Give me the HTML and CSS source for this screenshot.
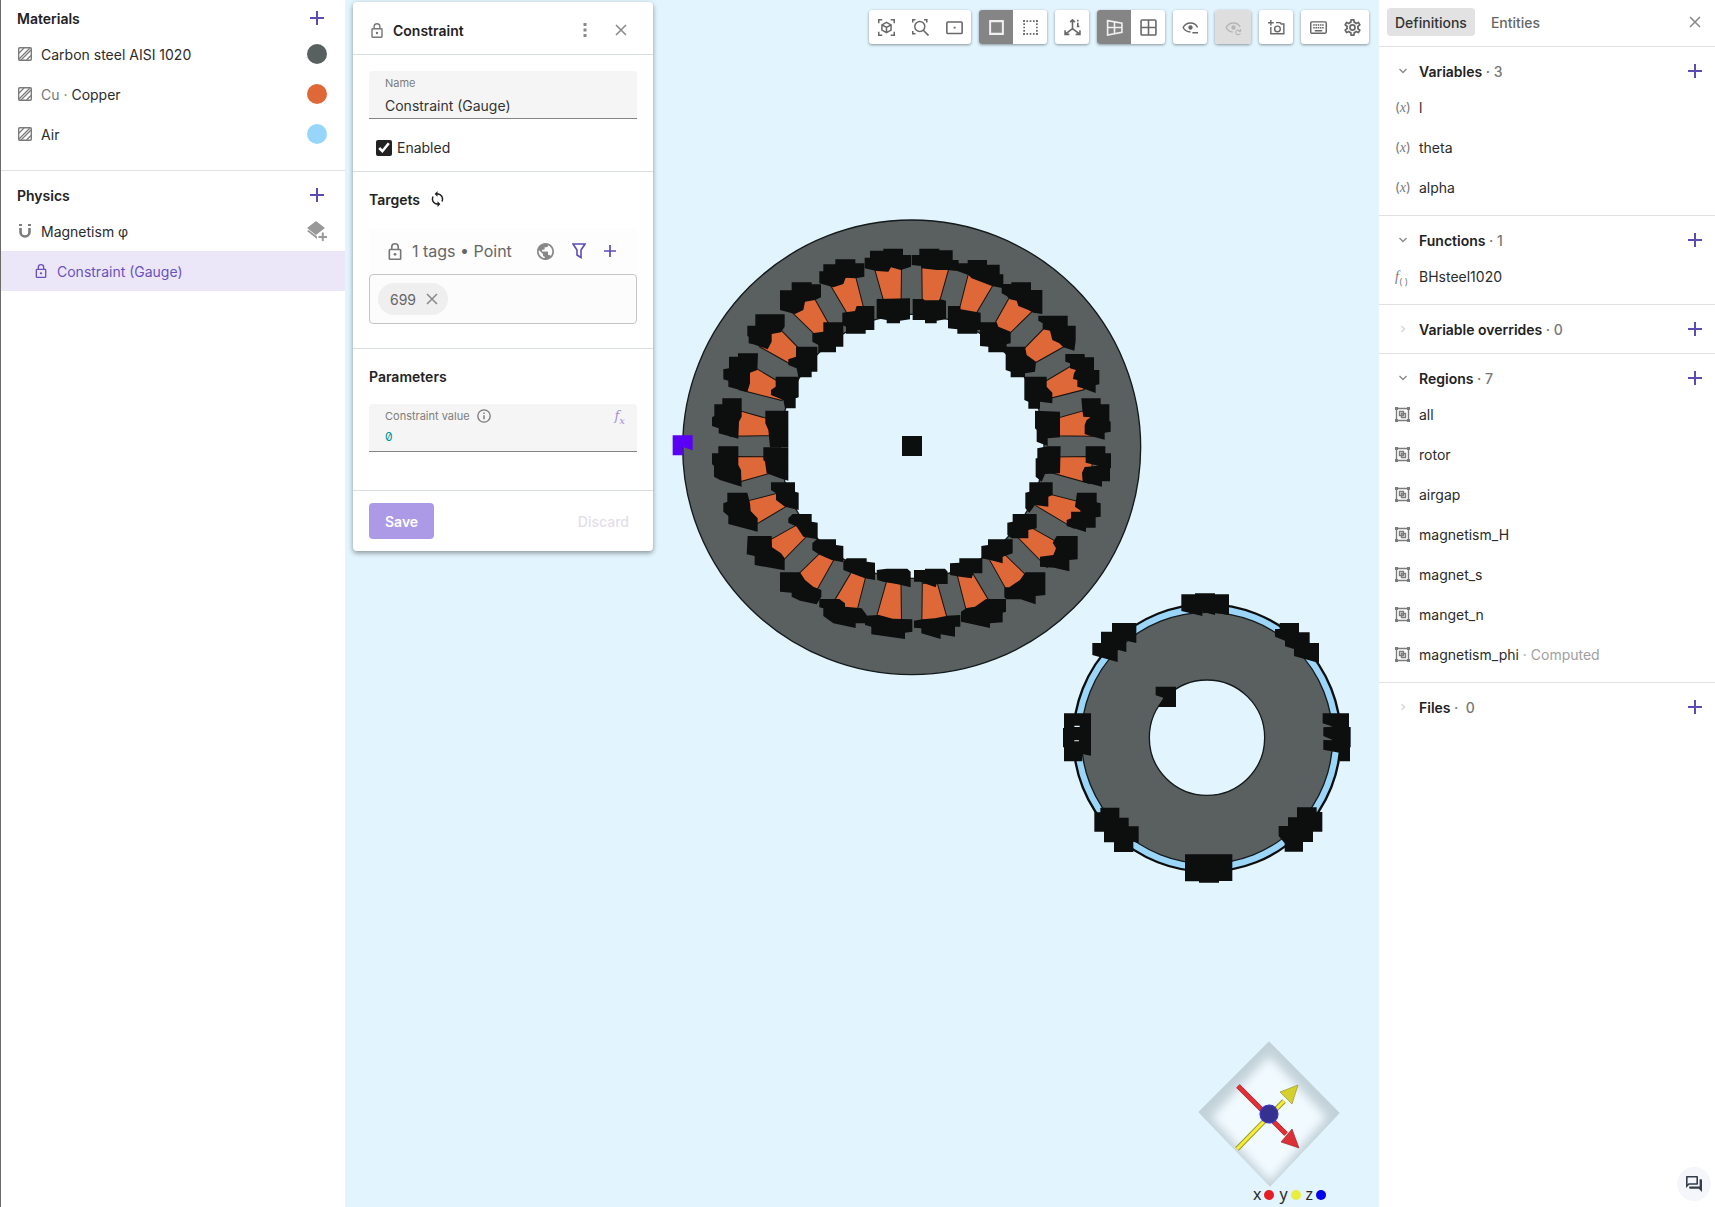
FILE: index.html
```html
<!DOCTYPE html>
<html lang="en">
<head>
    <meta charset="UTF-8">
    <meta name="viewport" content="width=device-width, initial-scale=1.0">
    <title>Constraint (Gauge)</title>
    <link rel="stylesheet" href="styles.css">
</head>
<body>
    <!-- Icon symbols -->
    <svg class="sprite" aria-hidden="true">
        <symbol id="plus" viewBox="0 0 14 14"><path d="M7 0v14M0 7h14" fill="none" stroke="currentColor" stroke-width="2"/></symbol>
        <symbol id="close" viewBox="0 0 12 12"><path d="M1 1l10 10M11 1L1 11" fill="none" stroke="currentColor" stroke-width="1.5"/></symbol>
        <symbol id="down" viewBox="0 0 16 16"><path d="M4.500 6l3.500 3.500L11.500 6" fill="none" stroke="currentColor" stroke-width="1.300"/></symbol>
        <symbol id="right" viewBox="0 0 16 16"><path d="M6.500 5l3 3-3 3" fill="none" stroke="currentColor" stroke-width="1.300"/></symbol>
        <symbol id="hatch" viewBox="0 0 14 14"><rect x=".7" y=".7" width="12.600" height="12.600" rx="1" fill="none" stroke="currentColor" stroke-width="1.400"/><path d="M1 6l5-5M1 12L12 1M3 13L13 3M8.500 13L13 8.500" stroke="currentColor" stroke-width="1.300"/></symbol>
        <symbol id="magnet" viewBox="0 0 14 14"><path d="M2.500 4v4a4.500 4.500 0 0 0 9 0V4" fill="none" stroke="currentColor" stroke-width="2.600"/><path d="M1 0h3v2H1zM10 0h3v2h-3z" fill="currentColor"/></symbol>
        <symbol id="layers" viewBox="0 0 20 20"><path d="M9 0l9 7-9 7-9-7zM0 10l1.500-1L10 15.500v2.500zM14.800 11.500h2V15H20v2h-3.200v3.500h-2V17h-3.300v-2h3.300z" fill="currentColor"/></symbol>
        <symbol id="lock" viewBox="4 1 16 21"><path d="M18 9H6a1 1 0 0 0-1 1v10a1 1 0 0 0 1 1h12a1 1 0 0 0 1-1V10a1 1 0 0 0-1-1zM8 9V6a4 4 0 0 1 8 0v3" fill="none" stroke="currentColor" stroke-width="2"/><circle cx="12" cy="15" r="1.700" fill="currentColor"/></symbol>
        <symbol id="dots" viewBox="0 0 4 14"><path d="M.5 0h3v3h-3zM.5 5.500h3v3h-3zM.5 11h3v3h-3z" fill="currentColor"/></symbol>
        <symbol id="sync" viewBox="3 1 18 22"><path d="M12 4V1L8 5l4 4V6c3.310 0 6 2.690 6 6 0 1.010-.25 1.970-.7 2.800l1.460 1.460C19.540 15.030 20 13.570 20 12c0-4.420-3.580-8-8-8zm0 14c-3.310 0-6-2.690-6-6 0-1.010.25-1.970.7-2.800L5.240 7.740C4.460 8.970 4 10.430 4 12c0 4.420 3.580 8 8 8v3l4-4-4-4v3z" fill="currentColor"/></symbol>
        <symbol id="globe" viewBox="2 2 20 20"><path d="M12 2C6.480 2 2 6.480 2 12s4.480 10 10 10 10-4.480 10-10S17.520 2 12 2zm-1 17.930c-3.950-.49-7-3.850-7-7.930 0-.62.08-1.210.21-1.790L9 15v1c0 1.100.9 2 2 2v1.930zm6.900-2.540c-.26-.81-1-1.390-1.900-1.390h-1v-3c0-.55-.45-1-1-1H8v-2h2c.55 0 1-.45 1-1V7h2c1.100 0 2-.9 2-2v-.41c2.930 1.190 5 4.060 5 7.410 0 2.080-.8 3.970-2.100 5.390z" fill="currentColor"/></symbol>
        <symbol id="filter" viewBox="0 0 14 16"><path d="M1 1h12L9 7v7.500L5 12V7z" fill="none" stroke="currentColor" stroke-width="1.600"/></symbol>
        <symbol id="info" viewBox="0 0 14 14"><circle cx="7" cy="7" r="6.200" fill="none" stroke="currentColor" stroke-width="1.300"/><path d="M7 6.200v4M7 3.600V5" stroke="currentColor" stroke-width="1.400"/></symbol>
        <symbol id="region" viewBox="0 0 15 15"><path d="M1.500 1.500h12v12h-12zM4.500 4.500h4v4h-4zM6.500 6.500h4v4h-4z" fill="none" stroke="currentColor" stroke-width="1.400"/><path d="M0 0h3v3H0zM12 0h3v3h-3zM0 12h3v3H0zM12 12h3v3h-3z" fill="currentColor"/></symbol>
        <symbol id="fit" viewBox="0 0 16 16"><path d="M.7 4V.7H4M12 .7h3.300V4M15.300 12v3.300H12M4 15.300H.7V12M8 3.200l4.300 2.400v4.900L8 12.900l-4.300-2.400V5.600zM3.700 5.600L8 8l4.300-2.400M8 8v4.900" fill="none" stroke="currentColor" stroke-width="1.400"/></symbol>
        <symbol id="zoomfit" viewBox="0 0 17 17"><path d="M.7 3.500V.7h2.800M12 .7h2.800v2.800M3.500 14.800H.7V12M11 11l5.500 5.500" fill="none" stroke="currentColor" stroke-width="1.600"/><circle cx="7.800" cy="7.500" r="5" fill="none" stroke="currentColor" stroke-width="1.500"/></symbol>
        <symbol id="frame" viewBox="0 0 16 16"><rect x=".8" y="2.800" width="14.400" height="10.800" rx="1" fill="none" stroke="currentColor" stroke-width="1.500"/><path d="M7.200 7.200h1.800V9H7.200z" fill="currentColor"/></symbol>
        <symbol id="solid" viewBox="0 0 16 16"><path d="M2 2h12v12H2z" fill="none" stroke="currentColor" stroke-width="1.900"/></symbol>
        <symbol id="dashed" viewBox="0 0 16 16"><path d="M1 2h14M1 14h14M2 1v14M14 1v14" fill="none" stroke="currentColor" stroke-width="1.600" stroke-dasharray="1.600 1.500"/></symbol>
        <symbol id="axes" viewBox="0 0 16 16"><path d="M8 1v8L1.500 14M8 9l6.500 5M5.800 3L8 .8 10.200 3M1 10.500v4h4M15 10.500v4h-4M13 3.500v3.500M12 7h2.500M13 .8v1.500" fill="none" stroke="currentColor" stroke-width="1.500"/></symbol>
        <symbol id="persp" viewBox="0 0 16 16"><path d="M1.500 1.500L15 4v8.500L1.500 15zM1.500 8H15M8 2.500v11.500" fill="none" stroke="currentColor" stroke-width="1.500"/></symbol>
        <symbol id="grid" viewBox="0 0 16 16"><rect x="1" y="1" width="14" height="14" rx="1" fill="none" stroke="currentColor" stroke-width="1.500"/><path d="M8 1v14M1 8h14" stroke="currentColor" stroke-width="1.500"/></symbol>
        <symbol id="eye" viewBox="0 0 18 16"><path d="M16.500 8C15.200 5 12.400 3.200 9 3.200S2.800 5 1.200 8c1.500 3 4.400 4.700 7.800 4.700" fill="none" stroke="currentColor" stroke-width="1.500"/><circle cx="9" cy="8" r="2.300" fill="currentColor"/><path d="M11 13.500h6" stroke="currentColor" stroke-width="1.500"/></symbol>
        <symbol id="eyesync" viewBox="0 0 18 16"><path d="M16 7.500C14.800 5 12.400 3.200 9 3.200S2.800 5 1.200 8c1.300 2.800 3.800 4.500 7 4.700" fill="none" stroke="currentColor" stroke-width="1.500"/><circle cx="9" cy="8" r="2.300" fill="currentColor"/><path d="M15.800 11.500a2.500 2.500 0 1 0 .5 2.500M16.500 9.500v2.500H14" fill="none" stroke="currentColor" stroke-width="1.100"/></symbol>
        <symbol id="camera" viewBox="0 0 18 16"><path d="M3 0v6M0 3h6" stroke="currentColor" stroke-width="1.500"/><path d="M3 7.500v7.200h13.800V4.300H14l-1.300-1.500H8.500" fill="none" stroke="currentColor" stroke-width="1.500"/><circle cx="10" cy="9.500" r="3" fill="none" stroke="currentColor" stroke-width="1.500"/></symbol>
        <symbol id="keyboard" viewBox="0 0 16 16"><rect x=".7" y="2.700" width="14.600" height="10.600" rx="1" fill="none" stroke="currentColor" stroke-width="1.400"/><path d="M3 5.700h10M3 8.200h10" stroke="currentColor" stroke-width="1.500" stroke-dasharray="1.500 .6"/><path d="M4.500 11h7" stroke="currentColor" stroke-width="1.300"/></symbol>
        <symbol id="cog" viewBox="2 2 20 20"><path d="M12,8A4,4 0 0,1 16,12A4,4 0 0,1 12,16A4,4 0 0,1 8,12A4,4 0 0,1 12,8M12,10A2,2 0 0,0 10,12A2,2 0 0,0 12,14A2,2 0 0,0 14,12A2,2 0 0,0 12,10M10,22C9.750,22 9.540,21.820 9.500,21.580L9.130,18.930C8.500,18.680 7.960,18.340 7.440,17.940L4.950,18.950C4.730,19.030 4.460,18.950 4.340,18.730L2.340,15.270C2.210,15.050 2.270,14.780 2.460,14.630L4.570,12.970L4.500,12L4.570,11L2.460,9.370C2.270,9.220 2.210,8.950 2.340,8.730L4.340,5.270C4.460,5.050 4.730,4.960 4.950,5.050L7.440,6.050C7.960,5.660 8.500,5.320 9.130,5.070L9.500,2.420C9.540,2.180 9.750,2 10,2H14C14.250,2 14.460,2.180 14.500,2.420L14.870,5.070C15.500,5.320 16.040,5.660 16.560,6.050L19.050,5.050C19.270,4.960 19.540,5.050 19.660,5.270L21.660,8.730C21.790,8.950 21.730,9.220 21.540,9.370L19.430,11L19.500,12L19.430,13L21.540,14.630C21.730,14.780 21.790,15.050 21.660,15.270L19.660,18.730C19.540,18.950 19.270,19.040 19.050,18.950L16.560,17.950C16.040,18.340 15.500,18.680 14.870,18.930L14.500,21.580C14.460,21.820 14.250,22 14,22H10M11.250,4L10.880,6.610C9.680,6.860 8.620,7.500 7.850,8.390L5.440,7.350L4.690,8.650L6.800,10.200C6.400,11.370 6.400,12.640 6.800,13.800L4.680,15.360L5.430,16.660L7.860,15.620C8.630,16.500 9.680,17.140 10.870,17.380L11.240,20H12.760L13.130,17.390C14.320,17.140 15.370,16.500 16.140,15.620L18.570,16.660L19.320,15.360L17.200,13.810C17.600,12.640 17.600,11.370 17.200,10.200L19.310,8.650L18.560,7.350L16.150,8.390C15.380,7.500 14.320,6.860 13.120,6.620L12.750,4H11.250Z" fill="currentColor"/></symbol>
        <symbol id="chat" viewBox="2 2 20 20"><path d="M15 4v7H5.170L4 12.170V4h11m1-2H3c-.55 0-1 .45-1 1v14l4-4h10c.55 0 1-.45 1-1V3c0-.55-.45-1-1-1zm5 4h-2v9H6v2c0 .55.45 1 1 1h11l4 4V7c0-.55-.45-1-1-1z" fill="currentColor"/></symbol>
    </svg>

    <div class="app">
        <!-- Left tree -->
        <aside class="tree">
            <section class="section section-top">
                <header class="section-head">
                    <h2>Materials</h2>
                    <button class="add" aria-label="Add material"><svg><use href="#plus"/></svg></button>
                </header>
                <ul>
                    <li class="row"><svg class="icon"><use href="#hatch"/></svg><span>Carbon steel AISI 1020</span><i class="swatch steel"></i></li>
                    <li class="row"><svg class="icon"><use href="#hatch"/></svg><span><span class="muted">Cu · </span>Copper</span><i class="swatch copper"></i></li>
                    <li class="row"><svg class="icon"><use href="#hatch"/></svg><span>Air</span><i class="swatch air"></i></li>
                </ul>
            </section>
            <section class="section">
                <header class="section-head">
                    <h2>Physics</h2>
                    <button class="add" aria-label="Add physics"><svg><use href="#plus"/></svg></button>
                </header>
                <ul>
                    <li class="row"><svg class="icon"><use href="#magnet"/></svg><span>Magnetism φ</span><svg class="layers"><use href="#layers"/></svg></li>
                    <li class="row child selected"><svg class="icon"><use href="#lock"/></svg><span>Constraint (Gauge)</span></li>
                </ul>
            </section>
        </aside>

        <!-- 3D view -->
        <main class="view">
            <svg class="scene" aria-label="Motor model">
                <defs>
                    <path id="slot" d="M684 165h82l-19 132h-44z"/>
                </defs>
                <!-- stator -->
                <g transform="translate(325 210) scale(.33333)">
                    <ellipse class="metal" cx="725" cy="712" rx="687" ry="682"/>
                    <circle class="hole" cx="726" cy="709" r="396"/>
                    <g class="slots">
                        <use href="#slot" transform="rotate(7.5 725 709)"/>
                        <use href="#slot" transform="rotate(22.5 725 709)"/>
                        <use href="#slot" transform="rotate(37.5 725 709)"/>
                        <use href="#slot" transform="rotate(52.5 725 709)"/>
                        <use href="#slot" transform="rotate(67.5 725 709)"/>
                        <use href="#slot" transform="rotate(82.5 725 709)"/>
                        <use href="#slot" transform="rotate(97.5 725 709)"/>
                        <use href="#slot" transform="rotate(112.5 725 709)"/>
                        <use href="#slot" transform="rotate(127.5 725 709)"/>
                        <use href="#slot" transform="rotate(142.5 725 709)"/>
                        <use href="#slot" transform="rotate(157.5 725 709)"/>
                        <use href="#slot" transform="rotate(172.5 725 709)"/>
                        <use href="#slot" transform="rotate(187.5 725 709)"/>
                        <use href="#slot" transform="rotate(202.5 725 709)"/>
                        <use href="#slot" transform="rotate(217.5 725 709)"/>
                        <use href="#slot" transform="rotate(232.5 725 709)"/>
                        <use href="#slot" transform="rotate(247.5 725 709)"/>
                        <use href="#slot" transform="rotate(262.5 725 709)"/>
                        <use href="#slot" transform="rotate(277.5 725 709)"/>
                        <use href="#slot" transform="rotate(292.5 725 709)"/>
                        <use href="#slot" transform="rotate(307.5 725 709)"/>
                        <use href="#slot" transform="rotate(322.5 725 709)"/>
                        <use href="#slot" transform="rotate(337.5 725 709)"/>
                        <use href="#slot" transform="rotate(352.5 725 709)"/>
                    </g>
                    <g class="points">
                        <path d="M725 135H748V116H808V121H848V150H866V160H893V150H951V164H989V193H1000V235L966 228 905 205 895 195 862 183 832 180 800 180 754 175V168L725 165z"/>
                        <path d="M995 222H1024V217H1083V240H1117V312L1090 308 1075 300 1045 288 1040 272 1020 268 1010 258 995 250z"/>
                        <path d="M1105 332V317H1193V347H1217V392L1213 422 1180 412 1168 400 1147 390 1140 362 1118 358V340z"/>
                        <path d="M1186 432H1244V442H1272V480H1288V523L1277 525V549L1238 535 1222 530V510L1209 507 1212 490 1218 480 1200 475V460L1186 455z"/>
                        <path d="M1234 565H1292V583H1318V632L1322 636V665L1304 668V689L1262 678 1244 672V645L1250 630 1262 622 1240 620 1237 600z"/>
                        <path d="M1247 709H1306V730H1323V775H1320V814H1296V830L1238 815 1236 788 1244 771 1285 767 1247 758z"/>
                        <path d="M1221 848H1280V877L1292 880V920L1277 922V953H1248V966L1190 948V930L1203 925V905H1236L1215 890z"/>
                        <path d="M1160 978H1223V1048L1198 1050V1084L1152 1073 1110 1070V1040L1150 1035 1158 1015 1148 998z"/>
                        <path d="M1066 1087H1126V1155L1097 1158V1183L1052 1168H1010L1003 1162V1132L1018 1132 1050 1110z"/>
                        <path d="M948 1167H1008V1205L998 1208V1237L960 1240V1254L895 1240 873 1235V1205L890 1194 915 1190z"/>
                        <path d="M732 1232L757 1228 795 1225 832 1217 871 1215V1250H855V1280L812 1273V1287L754 1270V1255L732 1253z"/>
                        <path d="M585 1217L627 1215 668 1226 727 1228V1265L705 1268V1287L604 1273V1250L585 1245z"/>
                        <path d="M448 1167H508L525 1180V1190L575 1195 590 1215V1240H557V1254L490 1240 460 1218V1195L448 1192z"/>
                        <path d="M330 1087H390L405 1110 430 1130 454 1140V1160L440 1183 390 1172 365 1160V1148L330 1145z"/>
                        <path d="M233 978H305L306 1012 333 1030 344 1045V1081L254 1065V1038L230 1033z"/>
                        <path d="M172 848H232L240 880 242 903 263 925V965L175 942V918L160 905V880L172 875z"/>
                        <path d="M145 709H205V765L213 780 215 830 150 810 132 800V768L126 762V730H145z"/>
                        <path d="M157 565H215V620L207 635 205 686 146 670V655L126 648V622L133 618V583H157z"/>
                        <path d="M204 430H264L262 480 240 488V520L232 546 175 530V512L160 508V478L177 475V440H204z"/>
                        <path d="M256 313H344V350L333 367 305 372V395L293 418 250 403 236 400V380L232 378V347H256z"/>
                        <path d="M365 217H425V223H453V262L435 270 405 275 400 300 375 312 330 300V241H365z"/>
                        <path d="M496 148H556V160H583V200L557 205 527 203 520 222 490 232 448 220V184H460V163H496z"/>
                        <path d="M640 122V116H699V135H723V170L692 180 663 172 655 185 620 183 584 175V143H600V122z"/>
                        <path d="M728 267H760L764 271H808V267L828 272V328L800 332V340H765V330H728z"/>
                        <path d="M834 288H870L872 298 915 305 932 308V360H922V371H862V358L834 355z"/>
                        <path d="M930 337H980L985 350 1022 365V400L1010 402V427H955V410L930 408z"/>
                        <path d="M1007 410H1065L1070 435 1098 455 1095 485 1065 490V502H1022V485L1007 480z"/>
                        <path d="M1063 500H1130V530L1147 548V580L1110 575V596H1075V575L1063 570z"/>
                        <path d="M1095 602L1170 605V682L1133 685V708L1100 695V660L1095 655z"/>
                        <path d="M1102 745V715L1133 709H1172L1170 790 1125 792 1115 815 1097 800V745z"/>
                        <path d="M1078 817H1148V855L1135 860V890L1095 885 1078 908 1066 895V848L1078 845z"/>
                        <path d="M1028 912H1100V955L1075 960V985H1025L1012 975V938L1028 935z"/>
                        <path d="M954 988H1028V1030L998 1040V1060L960 1050 934 1045V1008L954 1005z"/>
                        <path d="M868 1045H937V1090L910 1090 905 1105 870 1100 840 1095V1060L868 1058z"/>
                        <path d="M732 1080H765V1076H825L833 1085V1122H800L797 1132 750 1115H732z"/>
                        <path d="M620 1080L650 1076H712L722 1085V1132L680 1122 640 1115 622 1110z"/>
                        <path d="M530 1045H590V1055L615 1058V1110L585 1105 545 1090 520 1080V1055z"/>
                        <path d="M440 988H498V1005L520 1008V1057L485 1050 450 1035 427 1020V1000z"/>
                        <path d="M368 912H425V935L443 938V988L400 980 380 950 355 938V925z"/>
                        <path d="M303 817H375V845L386 848V900L345 890 318 870V850L303 840z"/>
                        <path d="M280 712H355V812L330 805 290 790 285 755 280 750z"/>
                        <path d="M286 602H355V712H300L295 660 286 640z"/>
                        <path d="M317 500H386V562L377 565V595H345L340 570 303 555V540L317 530z"/>
                        <path d="M378 410H442V485H425V502H385L380 475 355 465V448L378 440z"/>
                        <path d="M460 337H520V410H498V427H445V405L427 395V370L460 365z"/>
                        <path d="M560 288H613V360H587V371H528V350L517 345V308L555 303z"/>
                        <path d="M620 267L720 265V328L690 332V340H650V330L620 325z"/>
                        <path d="M696 678H756V738H696z"/>
                    </g>
                    <path class="picked" d="M8 676H68V721L38 711V736H8z"/>
                </g>
                <!-- rotor -->
                <g transform="translate(705 580) scale(.33333)">
                    <circle class="gap" cx="471" cy="474" r="401"/>
                    <circle class="metal" cx="471" cy="474" r="377"/>
                    <circle class="hole" cx="471" cy="473" r="173"/>
                    <g class="points">
                        <path d="M394 43H435V40H495V43H537V105L495 98V105L457 95V108L394 93z"/>
                        <path d="M186 129H259V189L229 182V216L203 209V246L127 225V189H153V155H186z"/>
                        <path d="M689 129H747V157H779V189H807V249L732 228V207L705 199V182L675 170V147H689z"/>
                        <path d="M42 400H123V527L97 522V544H42V502H39V444H42z"/>
                        <path d="M818 400H897V441H902V502H900V544H868V518L820 509V480L850 481 820 468V442L850 440 818 430z"/>
                        <path d="M151 683H208V713H236V739H266V790L250 785V816H192V787H162V755H133V697H151z"/>
                        <path d="M741 682H800V696H817V755H789V786H759V815H704V790L686 768V738H714V712H741z"/>
                        <path d="M405 823H547V903H507V908H447V904H405z"/>
                        <path d="M317 320H378V381H325L340 353 317 346z"/>
                    </g>
                    <path d="M73 437h16v4H73zM73 481h14v3H73z" fill="#e1f3fe"/>
                </g>
            </svg>

            <div class="toolbar">
                <div class="group">
                    <button aria-label="Fit all"><svg><use href="#fit"/></svg></button>
                    <button aria-label="Zoom to selection"><svg><use href="#zoomfit"/></svg></button>
                    <button aria-label="Center view"><svg><use href="#frame"/></svg></button>
                </div>
                <div class="group">
                    <button class="on" aria-label="Select"><svg><use href="#solid"/></svg></button>
                    <button aria-label="Box select"><svg><use href="#dashed"/></svg></button>
                </div>
                <div class="group"><button aria-label="Axes"><svg><use href="#axes"/></svg></button></div>
                <div class="group">
                    <button class="on" aria-label="Perspective"><svg><use href="#persp"/></svg></button>
                    <button aria-label="Orthographic"><svg><use href="#grid"/></svg></button>
                </div>
                <div class="group"><button aria-label="Hide"><svg><use href="#eye"/></svg></button></div>
                <div class="group"><button disabled aria-label="Reset visibility"><svg><use href="#eyesync"/></svg></button></div>
                <div class="group"><button aria-label="Screenshot"><svg><use href="#camera"/></svg></button></div>
                <div class="group">
                    <button aria-label="Shortcuts"><svg><use href="#keyboard"/></svg></button>
                    <button aria-label="Settings"><svg><use href="#cog"/></svg></button>
                </div>
            </div>

            <!-- Constraint dialog -->
            <form class="dialog">
                <header class="dialog-head">
                    <svg class="lock"><use href="#lock"/></svg>
                    <h2>Constraint</h2>
                    <button type="button" class="plain" aria-label="More"><svg class="dots"><use href="#dots"/></svg></button>
                    <button type="button" class="plain" aria-label="Close"><svg><use href="#close"/></svg></button>
                </header>
                <div class="dialog-part general">
                    <div class="field">
                        <label for="name">Name</label>
                        <input type="text" id="name" value="Constraint (Gauge)">
                    </div>
                    <label class="check"><input type="checkbox" checked>Enabled</label>
                </div>
                <div class="dialog-part targets">
                    <h3>Targets <svg class="sync"><use href="#sync"/></svg></h3>
                    <div class="tags-head">
                        <svg class="lock"><use href="#lock"/></svg>
                        <span>1 tags • Point</span>
                        <button type="button" class="plain" aria-label="Select all"><svg class="globe"><use href="#globe"/></svg></button>
                        <button type="button" class="plain accent" aria-label="Filter"><svg class="filter"><use href="#filter"/></svg></button>
                        <button type="button" class="plain accent" aria-label="Add tag"><svg><use href="#plus"/></svg></button>
                    </div>
                    <div class="tags">
                        <span class="chip">699 <button type="button" class="plain" aria-label="Remove"><svg><use href="#close"/></svg></button></span>
                    </div>
                </div>
                <div class="dialog-part params">
                    <h3>Parameters</h3>
                    <div class="field">
                        <div class="field-top">
                            <label for="value">Constraint value</label>
                            <svg class="info"><use href="#info"/></svg>
                            <span class="fx">f<sub>x</sub></span>
                        </div>
                        <input type="text" id="value" class="number" value="0">
                    </div>
                </div>
                <footer class="dialog-foot">
                    <button type="submit" class="save" disabled>Save</button>
                    <button type="reset" class="discard" disabled>Discard</button>
                </footer>
            </form>

            <!-- Orientation gizmo -->
            <div class="gizmo">
                <svg class="cube" viewBox="0 0 142 146">
                    <defs>
                        <clipPath id="face"><path d="M71 0l71 72-70 74L0 71z"/></clipPath>
                        <filter id="soft" x="-20%" y="-20%" width="140%" height="140%"><feGaussianBlur stdDeviation="5"/></filter>
                    </defs>
                    <g clip-path="url(#face)">
                        <path d="M71 0l71 72-70 74L0 71z" fill="#c3d2d9"/>
                        <path d="M71 18l55 58-54 62L16 76z" fill="#f1faff" stroke="#f1faff" stroke-width="4" filter="url(#soft)"/>
                    </g>
                    <path d="M39 108l47-48" stroke="#9a962a" stroke-width="5"/>
                    <path d="M39 108l47-48" stroke="#f3ef38" stroke-width="3"/>
                    <path d="M100 44L82 51l12 12z" fill="#d6d02e" stroke="#8f8c24" stroke-width=".6"/>
                    <path d="M40 45l48 48" stroke="#8e2528" stroke-width="5"/>
                    <path d="M40 45l48 48" stroke="#e43035" stroke-width="4"/>
                    <path d="M101 107L94 88 83 101z" fill="#db3035" stroke="#8e2528" stroke-width=".6"/>
                    <circle cx="71" cy="73" r="9" fill="#35328f" stroke="#3a33cb" stroke-width="1.200"/>
                </svg>
                <div class="legend">x<i class="x"></i> y<i class="y"></i> z<i class="z"></i></div>
            </div>
        </main>

        <!-- Right panel -->
        <aside class="panel">
            <nav class="tabs">
                <button class="tab active">Definitions</button>
                <button class="tab">Entities</button>
                <button class="plain" aria-label="Close"><svg><use href="#close"/></svg></button>
            </nav>
            <section class="section">
                <header class="section-head">
                    <svg class="arrow"><use href="#down"/></svg>
                    <h2>Variables <span>· 3</span></h2>
                    <button class="add" aria-label="Add variable"><svg><use href="#plus"/></svg></button>
                </header>
                <ul>
                    <li class="row"><i class="var">(<b>x</b>)</i><span>l</span></li>
                    <li class="row"><i class="var">(<b>x</b>)</i><span>theta</span></li>
                    <li class="row"><i class="var">(<b>x</b>)</i><span>alpha</span></li>
                </ul>
            </section>
            <section class="section">
                <header class="section-head">
                    <svg class="arrow"><use href="#down"/></svg>
                    <h2>Functions <span>· 1</span></h2>
                    <button class="add" aria-label="Add function"><svg><use href="#plus"/></svg></button>
                </header>
                <ul>
                    <li class="row"><i class="var"><b>f</b><sub>( )</sub></i><span>BHsteel1020</span></li>
                </ul>
            </section>
            <section class="section">
                <header class="section-head">
                    <svg class="arrow faint"><use href="#right"/></svg>
                    <h2>Variable overrides <span>· 0</span></h2>
                    <button class="add" aria-label="Add override"><svg><use href="#plus"/></svg></button>
                </header>
            </section>
            <section class="section">
                <header class="section-head">
                    <svg class="arrow"><use href="#down"/></svg>
                    <h2>Regions <span>· 7</span></h2>
                    <button class="add" aria-label="Add region"><svg><use href="#plus"/></svg></button>
                </header>
                <ul>
                    <li class="row"><svg class="icon"><use href="#region"/></svg><span>all</span></li>
                    <li class="row"><svg class="icon"><use href="#region"/></svg><span>rotor</span></li>
                    <li class="row"><svg class="icon"><use href="#region"/></svg><span>airgap</span></li>
                    <li class="row"><svg class="icon"><use href="#region"/></svg><span>magnetism_H</span></li>
                    <li class="row"><svg class="icon"><use href="#region"/></svg><span>magnet_s</span></li>
                    <li class="row"><svg class="icon"><use href="#region"/></svg><span>manget_n</span></li>
                    <li class="row"><svg class="icon"><use href="#region"/></svg><span>magnetism_phi <span class="faded">· Computed</span></span></li>
                </ul>
            </section>
            <section class="section">
                <header class="section-head">
                    <svg class="arrow faint"><use href="#right"/></svg>
                    <h2>Files <span>·&nbsp; 0</span></h2>
                    <button class="add" aria-label="Add file"><svg><use href="#plus"/></svg></button>
                </header>
            </section>
        </aside>
    </div>
    <button class="chat" aria-label="Chat"><svg><use href="#chat"/></svg></button>
</body>
</html>
```
FILE: styles.css
```css
* {
    box-sizing: border-box;
}
body {
    margin: 0;
    font-family: Inter, "Liberation Sans", sans-serif;
    font-size: 14px;
    color: #2b2b2b;
    background-color: #fff;
}
h2, h3, ul {
    margin: 0;
    padding: 0;
    list-style: none;
    font-size: 14px;
    font-weight: 600;
    color: #222;
}
ul {
    font-weight: 400;
    color: #2b2b2b;
}
button, input {
    font-family: inherit;
    font-size: 14px;
}
button {
    display: flex;
    align-items: center;
    justify-content: center;
    padding: 0;
    border: none;
    background: none;
    color: inherit;
    cursor: pointer;
}
svg {
    flex: none;
}
.sprite {
    position: absolute;
    width: 0;
    height: 0;
}
.app {
    display: grid;
    grid-template-columns: 345px 1fr 336px;
    height: 100vh;
}

/* Side panels */
.tree {
    border-left: 1px solid #6b6b6b;
}
.section {
    padding: 8px 0;
    border-bottom: 1px solid #dfe1e3;
}
.section:last-child {
    border-bottom: none;
}
.section-head {
    display: flex;
    align-items: center;
    height: 32px;
    padding: 0 13px 0 16px;
}
.section-head h2 {
    flex: 1;
}
.section-head h2 span {
    color: #777;
    font-weight: 500;
}
.tree .section-head {
    padding-right: 21px;
}
.tree .section-top {
    padding: 2px 0 16px;
}
.add {
    color: #5b4bb5;
}
.add svg {
    width: 14px;
    height: 14px;
}
.row {
    display: flex;
    align-items: center;
    gap: 9px;
    height: 40px;
    padding: 0 18px 0 17px;
}
.row .icon {
    width: 14px;
    height: 14px;
    color: #7b7b7b;
}
.child {
    padding-left: 33px;
}
.selected {
    background-color: #ebe7f8;
    color: #6a51bd;
}
.selected .icon {
    color: #6a51bd;
}
.muted {
    color: #777;
}
.faded {
    color: #a0a0a0;
}
.swatch {
    width: 20px;
    height: 20px;
    margin-left: auto;
    border-radius: 50%;
}
.steel {
    background-color: #596160;
}
.copper {
    background-color: #df6838;
}
.air {
    background-color: #97d6fa;
}
.layers {
    width: 20px;
    height: 20px;
    margin-left: auto;
    color: #999;
}
.tabs {
    display: flex;
    align-items: center;
    gap: 8px;
    height: 47px;
    padding: 0 14px 2px 8px;
    border-bottom: 1px solid #dfe1e3;
}
.tab {
    height: 28px;
    padding: 0 8px;
    border-radius: 4px;
    font-weight: 500;
    color: #666;
}
.tab.active {
    background-color: #e2e2e2;
    color: #333;
}
.tabs .plain {
    margin-left: auto;
}
.arrow {
    width: 16px;
    height: 16px;
    margin-right: 8px;
    color: #888;
}
.faint {
    color: #d5d5d5;
}
.panel .row .icon {
    width: 15px;
    height: 15px;
}
.panel .row {
    padding-left: 16px;
}
.var {
    width: 15px;
    font-size: 13px;
    font-style: normal;
    color: #777;
    white-space: nowrap;
}
.var b {
    font: italic 14px "Liberation Serif", serif;
}
.var sub {
    font-size: 9px;
    line-height: 0;
}

/* Model view */
.view {
    position: relative;
    overflow: hidden;
    background-color: #e2f4fe;
}
.scene {
    position: absolute;
    inset: 0;
    width: 100%;
    height: 100%;
}
.metal {
    fill: #59605f;
    stroke: #14191b;
    stroke-width: 4px;
}
.hole {
    fill: #e2f4fe;
    stroke: #14191b;
    stroke-width: 4px;
}
.gap {
    fill: #9bd6f9;
    stroke: #0d0e0e;
    stroke-width: 7px;
}
.slots {
    fill: #df6838;
    stroke: #17120f;
    stroke-width: 3px;
}
.points {
    fill: #0d0e0e;
}
.picked {
    fill: #5a00f5;
}
.toolbar {
    position: absolute;
    top: 10px;
    right: 10px;
    display: flex;
    gap: 8px;
}
.group {
    display: flex;
    overflow: hidden;
    border-radius: 3px;
    background-color: #fff;
    box-shadow: 0 1px 3px rgba(0,0,0,0.4);
}
.group button {
    width: 34px;
    height: 34px;
    color: #686868;
}
.group svg {
    width: 17px;
    height: 17px;
}
.group .on {
    background-color: #858585;
    color: #f0f0f0;
}
.group button:disabled {
    width: 36px;
    background-color: #dedede;
    color: #b5b5b5;
}

/* Dialog */
.dialog {
    position: absolute;
    top: 2px;
    left: 8px;
    width: 300px;
    border-radius: 4px;
    background-color: #fff;
    box-shadow: 0 2px 5px rgba(0,0,0,0.4);
}
.plain {
    color: #888;
}
.plain svg {
    width: 12px;
    height: 12px;
}
.plain .dots {
    width: 4px;
    height: 14px;
}
.accent {
    color: #5b4bb5;
}
.dialog-head {
    display: flex;
    align-items: center;
    height: 53px;
    padding: 4px 26px 0 18px;
    border-bottom: 1px solid #d9dee1;
}
.dialog-head h2 {
    flex: 1;
    margin-left: 10px;
}
.dialog-head .plain + .plain {
    margin-left: 28px;
}
.lock {
    width: 12px;
    height: 15px;
    color: #777;
}
.dialog-part {
    padding: 0 16px;
    border-bottom: 1px solid #d9dee1;
}
.general {
    height: 117px;
    padding-top: 16px;
}
.field {
    height: 48px;
    padding: 4px 16px 0;
    border-bottom: 1px solid #858585;
    border-radius: 4px 4px 0 0;
    background-color: #f5f5f5;
}
.field label {
    display: block;
    font-size: 11px;
    line-height: 16px;
    color: #7d7d7d;
}
.field input {
    display: block;
    width: 100%;
    height: 28px;
    padding: 0;
    border: none;
    outline: none;
    background: none;
    color: #333;
}
.check {
    display: flex;
    align-items: center;
    gap: 5px;
    margin-top: 20px;
    padding-left: 7px;
}
.check input {
    width: 16px;
    height: 16px;
    margin: 0;
    accent-color: #222;
}
.targets {
    height: 177px;
    padding-top: 15px;
}
h3 {
    display: flex;
    align-items: center;
    gap: 11px;
    height: 24px;
}
.sync {
    width: 13px;
    height: 16px;
}
.tags-head {
    display: flex;
    align-items: center;
    height: 46px;
    margin-top: 17px;
    padding: 0 21px 0 19px;
    background-color: #fdfdfd;
    font-size: 16px;
    color: #666;
}
.tags-head .lock {
    width: 14px;
    height: 17px;
}
.tags-head span {
    flex: 1;
    margin-left: 10px;
}
.tags-head .plain + .plain {
    margin-left: 18px;
}
.plain .globe {
    width: 17px;
    height: 17px;
}
.plain .filter {
    width: 14px;
    height: 16px;
}
.tags {
    height: 50px;
    padding: 8px;
    border: 1px solid #c2c5c8;
    border-radius: 4px;
    background-color: #fcfcfc;
}
.chip {
    display: inline-flex;
    align-items: center;
    gap: 10px;
    height: 32px;
    padding: 0 10px 0 12px;
    border-radius: 16px;
    background-color: #efefef;
    color: #666;
}
.params {
    height: 142px;
    padding-top: 15px;
}
.params .field {
    margin-top: 16px;
}
.field-top {
    display: flex;
    align-items: center;
    gap: 7px;
}
.info {
    width: 14px;
    height: 14px;
    color: #777;
}
.fx {
    margin-left: auto;
    margin-right: -4px;
    font: italic 13px/16px "DejaVu Serif", serif;
    color: #a28fdc;
}
.fx sub {
    font-size: 10px;
    line-height: 0;
}
.field .number {
    height: 24px;
    font-size: 12px;
    font-feature-settings: "zero";
    color: #00969a;
}
.dialog-foot {
    display: flex;
    align-items: center;
    justify-content: space-between;
    height: 60px;
    padding: 0 24px 0 16px;
}
.save {
    height: 36px;
    padding: 0 16px;
    border-radius: 4px;
    background-color: #ac9ae6;
    color: #fff;
    font-weight: 600;
}
.discard {
    color: #e3e0ea;
    font-weight: 500;
}

/* Gizmo */
.gizmo {
    position: absolute;
    right: 39px;
    bottom: 0;
    width: 142px;
}
.cube {
    display: block;
    width: 100%;
}
.legend {
    display: flex;
    align-items: center;
    justify-content: center;
    gap: 3px;
    height: 20px;
    padding: 0 0 5px 43px;
    font-family: "Noto Sans", sans-serif;
    font-size: 16px;
    line-height: 15px;
}
.legend i {
    width: 10px;
    height: 10px;
    margin-right: 2px;
    border-radius: 50%;
}
.legend .x {
    background-color: #e81c24;
}
.legend .y {
    background-color: #e8ed3e;
}
.legend .z {
    background-color: #0000f0;
}
.chat {
    position: fixed;
    right: 4px;
    bottom: 6px;
    width: 34px;
    height: 34px;
    border-radius: 50%;
    background-color: #f4f6fb;
    color: #343c4a;
}
.chat svg {
    width: 16px;
    height: 16px;
}
```
